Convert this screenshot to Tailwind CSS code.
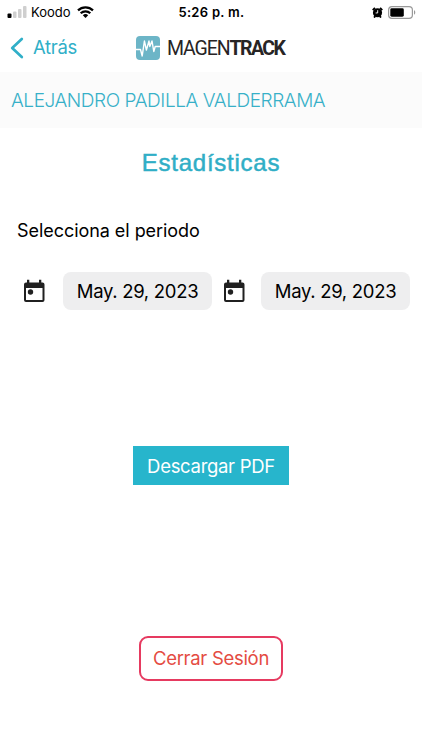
<!DOCTYPE html>
<html lang="es">

<head>
    <meta charset="UTF-8">
    <meta name="viewport" content="width=device-width, initial-scale=1.0">
    <script src="https://cdn.jsdelivr.net/npm/@tailwindcss/browser@4"></script>
    <title>Magentrack</title>
</head>

<body class="w-[422px] h-[750px] overflow-hidden bg-white text-black font-['Inter','Liberation_Sans',sans-serif] whitespace-nowrap">

    <!-- Status bar -->
    <div class="grid grid-cols-3 items-center h-6 pl-[7px] pr-[6px]">
        <div class="flex items-center">
            <svg class="w-5 h-3" viewBox="0 0 20 12">
                <rect x="0.5" y="7.5" width="4" height="4.5" rx="1" fill="#000" />
                <rect x="6" y="5.5" width="3.5" height="6.5" rx="1" fill="#cfcfcf" />
                <rect x="11" y="3" width="3.5" height="9" rx="1" fill="#cfcfcf" />
                <rect x="16" y="0" width="3.5" height="12" rx="1" fill="#cfcfcf" />
            </svg>
            <span class="ml-1 pt-px text-[13px]">Koodo</span>
            <svg class="w-[17px] h-3 ml-[6px]" viewBox="0 0 17 12" fill="none" stroke="#000" stroke-width="2.2">
                <path d="M1 4.4a10.6 10.6 0 0 1 15 0" />
                <path d="M3.7 7.3a6.8 6.8 0 0 1 9.6 0" />
                <path d="M8.5 12 5.8 9.2a3.9 3.9 0 0 1 5.4 0z" fill="#000" stroke="none" />
            </svg>
        </div>
        <span class="pt-px text-center text-[13px] font-semibold tracking-[0.3px]">5:26 p. m.</span>
        <div class="flex items-center justify-end gap-[5px]">
            <svg class="w-[11px] h-[11px]" viewBox="0 0 12 12">
                <circle cx="6" cy="6.3" r="5" />
                <path d="M.8 3.4 3.2.9M11.2 3.4 8.8.9M2.2 11.5l1.4-1.6M9.8 11.5 8.4 9.9" stroke="#000" stroke-width="2" />
                <path d="M6.2 3.5v3H4" fill="none" stroke="#fff" />
            </svg>
            <svg class="w-7 h-[13px]" viewBox="0 0 28 13">
                <rect x="0.6" y="0.6" width="23.8" height="11.8" rx="3.4" fill="none" stroke="#999" stroke-width="1.2" />
                <rect x="2.3" y="2.3" width="13.5" height="8.4" rx="1.4" />
                <path d="M26 4.3c1.7.6 1.7 3.8 0 4.4z" fill="#999" />
            </svg>
        </div>
    </div>

    <!-- Navigation bar -->
    <div class="flex items-center h-12 pl-[10px]">
        <button class="flex items-center w-[126px] text-[#30afc8]">
            <svg class="w-[14px] h-[22px]" viewBox="0 0 14 22" fill="none" stroke="currentColor" stroke-width="2.7" stroke-linecap="round" stroke-linejoin="round">
                <path d="M11.8 2 2.2 11l9.6 9" />
            </svg>
            <span class="ml-[9px] text-[18.5px] tracking-[-0.3px]">Atrás</span>
        </button>
        <svg class="w-6 h-6" viewBox="0 0 24 24">
            <rect width="24" height="24" rx="4" fill="#6cb5c7" />
            <path d="M0 13.5h4.5l1.7 6.5L8.400 5l2 9L13 5l.8 5.500L16 5l1.800 10.500L19.200 10.500H24" fill="none" stroke="#fff" stroke-width="1.400" stroke-linejoin="round" />
        </svg>
        <span class="ml-[7px] pt-px font-['Roboto'] text-[19.5px] tracking-[-1.1px] text-[#272425]">MAGEN<b class="tracking-[-1.6px]">TRACK</b></span>
    </div>

    <!-- User name -->
    <div class="flex items-center h-14 pl-[11px] pt-[3px] bg-[#fbfbfb]">
        <span class="text-[19px] font-light tracking-[-0.43px] text-[#37b0c8]">ALEJANDRO PADILLA VALDERRAMA</span>
    </div>

    <main class="flex flex-col">
        <h1 class="mt-[19px] h-8 text-center font-['Liberation_Sans'] text-[24px] leading-8 tracking-[0.75px] [-webkit-text-stroke:0.5px_#30aec6] text-[#30aec6]">Estadísticas</h1>

        <p class="mt-[38px] ml-[17px] text-[18px] leading-7 tracking-[-0.05px]">Selecciona el periodo</p>

        <!-- Date range -->
        <div class="flex items-center mt-[27px] ml-[22px]">
            <svg class="w-6 h-6 mr-[17px]" viewBox="0 0 24 24" fill="#202020">
                <path d="M4 3.5h16.5a2 2 0 0 1 2 2V21a2 2 0 0 1-2 2H4a2 2 0 0 1-2-2V5.5a2 2 0 0 1 2-2zM4 9v12h16.5V9z" fill-rule="evenodd" />
                <path d="M5 .8h2.3v4H5zM17 .8h2.3v4H17z" />
                <circle cx="8.5" cy="13" r="2.7" />
            </svg>
            <button class="w-[149px] h-[38px] pt-[2px] rounded-lg bg-[#eeeeef] text-[18.5px] tracking-[-0.3px]">May. 29, 2023</button>
            <svg class="w-6 h-6 ml-[10px] mr-[15px]" viewBox="0 0 24 24" fill="#202020">
                <path d="M4 3.5h16.5a2 2 0 0 1 2 2V21a2 2 0 0 1-2 2H4a2 2 0 0 1-2-2V5.5a2 2 0 0 1 2-2zM4 9v12h16.5V9z" fill-rule="evenodd" />
                <path d="M5 .8h2.3v4H5zM17 .8h2.3v4H17z" />
                <circle cx="8.5" cy="13" r="2.7" />
            </svg>
            <button class="w-[149px] h-[38px] pt-[2px] rounded-lg bg-[#eeeeef] text-[18.5px] tracking-[-0.3px]">May. 29, 2023</button>
        </div>

        <button class="w-[156px] h-[39px] mt-[136px] ml-[133px] pt-[2px] bg-[#27b5cc] text-[18.5px] tracking-[-0.3px] text-white">Descargar PDF</button>

        <button class="w-[144px] h-[45px] mt-[151px] ml-[139px] border-2 border-[#e63a60] rounded-[9px] text-[18.5px] tracking-[-0.3px] text-[#e44b42]">Cerrar Sesión</button>
    </main>

</body>

</html>
